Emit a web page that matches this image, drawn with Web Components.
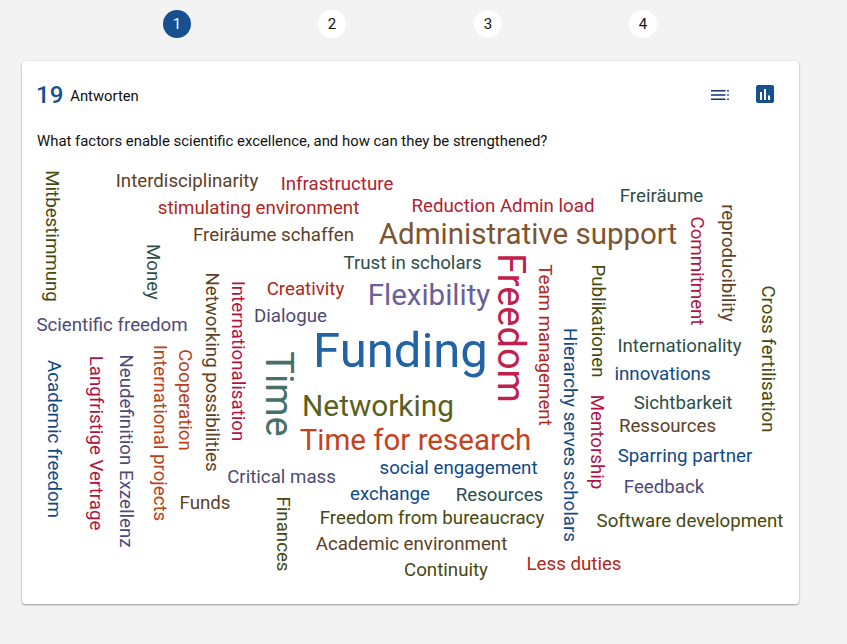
<!DOCTYPE html>
<html lang="de">
<head>
<meta charset="utf-8">
<title>Antworten</title>
<style>
  html, body { margin: 0; height: 100%; }
  body { background: #f3f3f3; font-family: Roboto, "Liberation Sans", sans-serif; overflow: hidden; }
</style>
</head>
<body>
<survey-page>
  <step-bar slot="steps" count="4" active="1"></step-bar>
  <result-card count="19" label="Antworten" question="What factors enable scientific excellence, and how can they be strengthened?">
    <word-cloud></word-cloud>
  </result-card>
</survey-page>

<script>
class SurveyPage extends HTMLElement {
  constructor() {
    super();
    this.attachShadow({ mode: 'open' });
  }

  connectedCallback() {
    this.shadowRoot.innerHTML = `
      <style>
        :host {
          display: flex;
          flex-direction: column;
          gap: 23px;
          padding: 10px 48px 40px 22px;
          box-sizing: border-box;
          height: 644px;
        }
      </style>
      <slot name="steps"></slot>
      <slot></slot>
    `;
  }
}

class StepBar extends HTMLElement {
  constructor() {
    super();
    this.attachShadow({ mode: 'open' });
  }

  connectedCallback() {
    const count = Number(this.getAttribute('count')) || 1;
    const active = Number(this.getAttribute('active')) || 1;
    let steps = '';
    for (let i = 1; i <= count; i++) {
      steps += `<div class="step ${i === active ? 'active' : ''}">${i}</div>`;
    }

    this.shadowRoot.innerHTML = `
      <style>
        :host {
          display: flex;
          gap: 127px;
          padding-left: 141px;
        }
        .step {
          width: 28px;
          height: 28px;
          border-radius: 50%;
          background: #fff;
          color: #111;
          font-size: 15px;
          display: flex;
          align-items: center;
          justify-content: center;
        }
        .step:nth-child(4) { margin-left: 1px; }
        .active {
          background: #17508f;
          color: #fff;
        }
      </style>
      ${steps}
    `;
  }
}

class ResultCard extends HTMLElement {
  constructor() {
    super();
    this.attachShadow({ mode: 'open' });
  }

  connectedCallback() {
    const count = this.getAttribute('count') || '0';
    const label = this.getAttribute('label') || '';
    const question = this.getAttribute('question') || '';

    this.shadowRoot.innerHTML = `
      <style>
        :host {
          display: flex;
          flex-direction: column;
          flex: 1;
          background: #fff;
          border-radius: 4px;
          box-shadow: 0 1px 2px rgba(0, 0, 0, 0.35), 0 0 3px rgba(0, 0, 0, 0.08);
          color: #111;
        }
        .header {
          display: flex;
          align-items: center;
          height: 24px;
          padding: 22px 22px 0 14px;
        }
        .count {
          font-size: 24px;
          font-weight: 500;
          color: #17508f;
          margin-right: 7px;
        }
        .label {
          font-size: 14.8px;
          padding-top: 2px;
          flex: 1;
        }
        .actions {
          display: flex;
          gap: 21px;
        }
        .actions svg {
          display: block;
          width: 24px;
          height: 24px;
        }
        .question {
          font-size: 14.9px;
          line-height: 20px;
          padding: 24px 15px 0;
        }
        .body {
          flex: 1;
          margin-top: 9px;
        }
      </style>
      <div class="header">
        <span class="count">${count}</span>
        <span class="label">${label}</span>
        <div class="actions">
          <svg viewBox="0 0 24 24" aria-label="Liste">
            <path fill="#12386e" d="M3 7h14.5v1.6H3zM3 11.2h14.5v1.6H3zM3 15.4h14.5V17H3zM19.2 7h1.6v1.6h-1.6zM19.2 11.2h1.6v1.6h-1.6zM19.2 15.4h1.6V17h-1.6z"/>
          </svg>
          <svg viewBox="0 0 24 24" aria-label="Diagramm">
            <rect x="3" y="2" width="18" height="18" rx="2" fill="#17508f"/>
            <path fill="#fff" d="M7 9h2v8H7zM11 6h2v11h-2zM15 12.5h2V17h-2z"/>
          </svg>
        </div>
      </div>
      <div class="question">${question}</div>
      <div class="body"><slot></slot></div>
    `;
  }
}

// one word of the cloud, x/y is the centre of the word inside the cloud
class CloudWord extends HTMLElement {
  constructor() {
    super();
    this.attachShadow({ mode: 'open' });
  }

  connectedCallback() {
    const x = this.getAttribute('x');
    const y = this.getAttribute('y');
    const size = this.getAttribute('size');
    const color = this.getAttribute('color');
    const turn = this.hasAttribute('turn') ? 90 : 0;

    this.shadowRoot.innerHTML = `
      <style>
        :host {
          position: absolute;
          left: ${x}px;
          top: ${y}px;
          font-size: ${size}px;
          line-height: 1;
          color: ${color};
          white-space: nowrap;
          transform: translate(-50%, -50%) rotate(${turn}deg);
        }
      </style>
      <slot></slot>
    `;
  }
}

const BLUE = '#0f4a85';
const CRIMSON = '#b3123f';
const OLIVE = '#46490f';
const BROWN = '#5e4026';
const GREEN = '#2c4f49';
const PURPLE = '#4e4a78';
const RUST = '#b8401a';
const RED = '#b3261c';
const S = 18.7;

// page coordinates taken from the picture: [text, x, y, size, colour, turned]
const WORDS = [
  ['Interdisciplinarity', 187, 181, S, BROWN],
  ['Infrastructure', 337, 183.5, S, '#b5202f'],
  ['stimulating environment', 258.5, 207.5, S, RED],
  ['Reduction Admin load', 503, 205.5, S, '#b5202f'],
  ['Freiräume', 661.5, 195.5, S, GREEN],
  ['Freiräume schaffen', 273.5, 234.5, S, BROWN],
  ['Administrative support', 528, 235, 29.5, '#7d5430'],
  ['Trust in scholars', 412.5, 262.5, S, GREEN],
  ['Creativity', 305.5, 289, S, RED],
  ['Flexibility', 429, 296, 29.5, '#6a6099'],
  ['Dialogue', 290.5, 316, S, PURPLE],
  ['Scientific freedom', 112, 325, S, PURPLE],
  ['Funding', 400.5, 350, 49, '#2263a6'],
  ['Networking', 378, 406, 29.8, '#5b5f20'],
  ['Time for research', 415.5, 441, 29.5, '#c4421c'],
  ['Internationality', 679.5, 346, S, GREEN],
  ['innovations', 662.5, 373.5, S, BLUE],
  ['Sichtbarkeit', 683, 403, S, GREEN],
  ['Ressources', 667.5, 426, S, BROWN],
  ['Sparring partner', 685, 455.5, S, BLUE],
  ['Feedback', 664, 487, S, PURPLE],
  ['Software development', 690, 521, S, OLIVE],
  ['social engagement', 458.5, 468, S, BLUE],
  ['Critical mass', 281.5, 477, S, PURPLE],
  ['exchange', 390, 494, S, BLUE],
  ['Resources', 499.5, 495, S, GREEN],
  ['Funds', 205, 503, S, BROWN],
  ['Freedom from bureaucracy', 432, 517.5, S, OLIVE],
  ['Academic environment', 411.5, 543.5, S, BROWN],
  ['Continuity', 446, 570, S, OLIVE],
  ['Less duties', 574, 564, S, RED],
  ['Mitbestimmung', 51.5, 236, S, OLIVE, true],
  ['Money', 153, 272, S, GREEN, true],
  ['Networking possibilities', 212, 372, S, BROWN, true],
  ['Internationalisation', 238, 361, S, CRIMSON, true],
  ['Time', 279, 394, 38, '#47706a', true],
  ['Freedom', 511, 328, 38, '#c21f4e', true],
  ['Team management', 545, 345, S, RED, true],
  ['Publikationen', 598, 321, S, OLIVE, true],
  ['Hierarchy serves scholars', 570, 435, S, BLUE, true],
  ['Mentorship', 597, 442, S, CRIMSON, true],
  ['Commitment', 697, 270.5, S, CRIMSON, true],
  ['reproducibility', 728, 263, S, BROWN, true],
  ['Cross fertilisation', 768, 358.5, S, OLIVE, true],
  ['Academic freedom', 54, 439, S, BLUE, true],
  ['Langfristige Vertrage', 96, 442.5, S, CRIMSON, true],
  ['Neudefinition Exzellenz', 126, 450.5, S, PURPLE, true],
  ['International projects', 160, 432.5, S, RUST, true],
  ['Cooperation', 185, 399.5, S, RUST, true],
  ['Finances', 283, 534, S, OLIVE, true],
];

class WordCloud extends HTMLElement {
  constructor() {
    super();
    this.attachShadow({ mode: 'open' });
  }

  connectedCallback() {
    this.shadowRoot.innerHTML = `
      <style>
        :host {
          display: block;
          position: relative;
          height: 444px;
        }
      </style>
      <slot></slot>
    `;
    // the cloud starts at 22,160 on the page
    for (const [text, x, y, size, color, turned] of WORDS) {
      const word = document.createElement('cloud-word');
      word.setAttribute('x', x - 22);
      word.setAttribute('y', y - 160);
      word.setAttribute('size', size);
      word.setAttribute('color', color);
      if (turned) word.setAttribute('turn', '');
      word.textContent = text;
      this.appendChild(word);
    }
  }
}

customElements.define('survey-page', SurveyPage);
customElements.define('step-bar', StepBar);
customElements.define('result-card', ResultCard);
customElements.define('cloud-word', CloudWord);
customElements.define('word-cloud', WordCloud);
</script>
</body>
</html>
